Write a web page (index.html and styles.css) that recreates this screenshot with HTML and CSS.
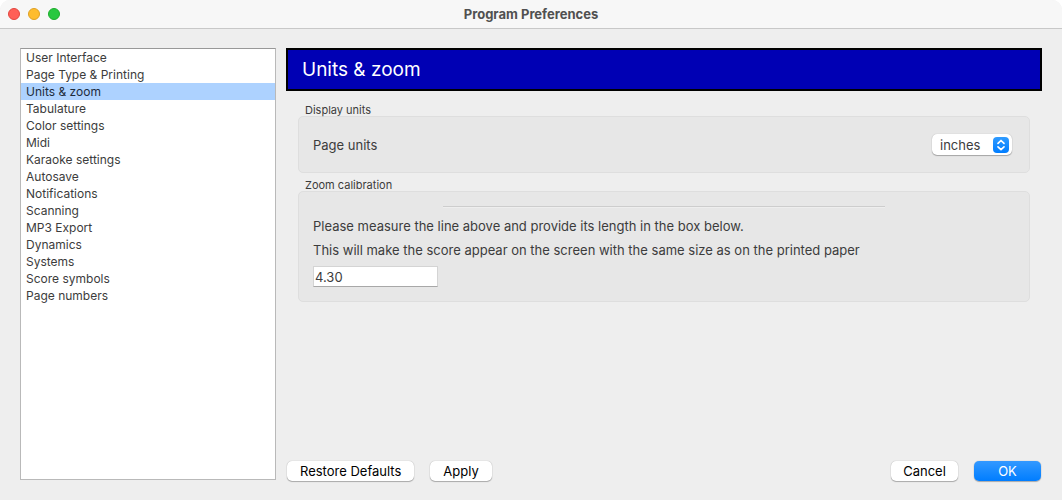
FILE: index.html
```html
<!DOCTYPE html>
<html lang="en">
<head>
<meta charset="utf-8">
<meta name="viewport" content="width=device-width, initial-scale=1">
<title>Program Preferences</title>
<link rel="stylesheet" href="styles.css">
</head>
<body>
<div class="window">
  <header class="titlebar">
    <div class="lights">
      <button class="light light-close" type="button" aria-label="Close"></button>
      <button class="light light-minimize" type="button" aria-label="Minimize"></button>
      <button class="light light-zoom" type="button" aria-label="Zoom"></button>
    </div>
    <h1 class="window-title">Program Preferences</h1>
  </header>
  <div class="content">
    <nav class="categories" aria-label="Categories">
      <a class="category" href="#user-interface">User Interface</a>
      <a class="category" href="#page-type">Page Type &amp; Printing</a>
      <a class="category category-selected" href="#units" aria-current="page">Units &amp; zoom</a>
      <a class="category" href="#tabulature">Tabulature</a>
      <a class="category" href="#color">Color settings</a>
      <a class="category" href="#midi">Midi</a>
      <a class="category" href="#karaoke">Karaoke settings</a>
      <a class="category" href="#autosave">Autosave</a>
      <a class="category" href="#notifications">Notifications</a>
      <a class="category" href="#scanning">Scanning</a>
      <a class="category" href="#mp3">MP3 Export</a>
      <a class="category" href="#dynamics">Dynamics</a>
      <a class="category" href="#systems">Systems</a>
      <a class="category" href="#symbols">Score symbols</a>
      <a class="category" href="#page-numbers">Page numbers</a>
    </nav>
    <form class="panel" id="units">
      <h2 class="banner">Units &amp; zoom</h2>
      <div class="groups">
        <fieldset class="group">
          <legend class="group-title">Display units</legend>
          <div class="box box-row">
            <label for="page-units">Page units</label>
            <span class="popup">
              <select class="popup-select" id="page-units">
                <option selected>inches</option>
                <option>mm</option>
              </select>
              <svg class="popup-arrows" viewBox="0 0 16 16" aria-hidden="true">
                <defs>
                  <linearGradient id="arrow-fill" x1="0" y1="0" x2="0" y2="1">
                    <stop offset="0" stop-color="#2f9bff"/>
                    <stop offset="1" stop-color="#007dff"/>
                  </linearGradient>
                </defs>
                <rect width="16" height="16" rx="4" fill="url(#arrow-fill)"/>
                <path d="M5 6.3 8 3.5l3 2.8M5 9.9l3 2.8 3-2.8" fill="none" stroke="#fff" stroke-width="1.7" stroke-linecap="round" stroke-linejoin="round"/>
              </svg>
            </span>
          </div>
        </fieldset>
        <fieldset class="group">
          <legend class="group-title">Zoom calibration</legend>
          <div class="box box-stack">
            <hr class="ruler">
            <label class="note" for="length">Please measure the line above and provide its length in the box below.</label>
            <p class="note">This will make the score appear on the screen with the same size as on the printed paper</p>
            <input class="length" id="length" type="text" value="4.30">
          </div>
        </fieldset>
      </div>
      <div class="actions">
        <button class="button" type="reset">Restore Defaults</button>
        <button class="button" type="button">Apply</button>
        <button class="button button-cancel" type="button">Cancel</button>
        <button class="button button-primary" type="submit">OK</button>
      </div>
    </form>
  </div>
</div>
</body>
</html>
```
FILE: styles.css
```css
* {
  box-sizing: border-box;
}

body {
  margin: 0;
  background: #fff;
  color: #3c3c3c;
  font: 13px/16px Inter, "Liberation Sans", sans-serif;
}

.window {
  display: flex;
  flex-direction: column;
  min-height: 100vh;
  overflow: hidden;
  border-radius: 10px 10px 0 0;
  background: #eee;
}

.titlebar {
  display: grid;
  grid-template-columns: 1fr auto 1fr;
  align-items: center;
  height: 29px;
  padding: 0 8px;
  border-bottom: 1px solid #c8c8c8;
  background: #f7f7f7;
}

.lights {
  display: flex;
  gap: 8px;
}

.light {
  width: 12px;
  height: 12px;
  padding: 0;
  border: 1px solid;
  border-radius: 50%;
}

.light-close {
  border-color: #e2463f;
  background: #ff5f57;
}

.light-minimize {
  border-color: #dfa023;
  background: #febc2e;
}

.light-zoom {
  border-color: #1dad2b;
  background: #28c840;
}

.window-title {
  margin: 0;
  color: #505050;
  font-size: 13px;
  font-weight: 700;
}

.content {
  display: flex;
  flex: 1;
  gap: 10px;
  padding: 19px 20px 20px;
}

.categories {
  flex: 0 0 256px;
  border: 1px solid #b9b9b9;
  border-top-color: #989898;
  background: #fff;
}

.category {
  display: block;
  padding: 0 5px;
  color: #3c3c3c;
  font-size: 12px;
  line-height: 17px;
  text-decoration: none;
}

.category-selected {
  background: #add2ff;
  color: #1e2c3c;
}

.panel {
  display: flex;
  flex: 1;
  flex-direction: column;
  min-width: 0;
}

.banner {
  margin: 0;
  padding: 8px 14px 7px;
  border: 2px solid #000;
  background: #0000b4;
  color: #fff;
  font-size: 19px;
  font-weight: 400;
  line-height: 24px;
}

.groups {
  display: flex;
  flex: 1;
  flex-direction: column;
  gap: 6px;
  padding: 13px 12px;
}

.group {
  min-width: 0;
  margin: 0;
  padding: 0;
  border: 0;
}

.group-title {
  padding: 0 7px;
  font-size: 11px;
  line-height: 12px;
}

.box {
  padding: 14px;
  border: 1px solid #dedede;
  border-radius: 5px;
  background: #e7e7e7;
}

.box-row {
  display: flex;
  align-items: center;
  justify-content: space-between;
  padding: 17px;
  padding-left: 14px;
}

.popup {
  display: grid;
  align-items: center;
}

.popup-select,
.popup-arrows {
  grid-area: 1 / 1;
}

.popup-select {
  width: 80px;
  height: 21px;
  padding: 0 8px;
  border: 0;
  border-radius: 5px;
  appearance: none;
  background: #fff;
  box-shadow: 0 0 1px #0004, 0 1px 1px #0004;
  color: #3c3c3c;
  font: inherit;
}

.popup-arrows {
  justify-self: end;
  width: 16px;
  height: 16px;
  margin-right: 3px;
  pointer-events: none;
}

.box-stack {
  display: flex;
  flex-direction: column;
  align-items: flex-start;
  gap: 8px;
}

.ruler {
  align-self: center;
  width: 63%;
  margin: 0 0 2px;
  border: 0;
  border-top: 1px solid #cdcdcd;
  border-bottom: 1px solid #eee;
}

.note {
  margin: 0;
}

.length {
  width: 125px;
  height: 21px;
  padding: 1px;
  border: 1px solid #d4d4d4;
  border-bottom-color: #a8a8a8;
  background: #fff;
  color: #3c3c3c;
  font: inherit;
}

.actions {
  display: flex;
  gap: 16px;
  padding: 0 1px;
}

.button {
  height: 20px;
  margin-bottom: -1px;
  padding: 0 13px;
  border: 0;
  border-radius: 5px;
  background: #fff;
  box-shadow: 0 0 1px #0005, 0 1px 1px #0004;
  color: #000;
  font: inherit;
}

.button-cancel {
  margin-left: auto;
}

.button-cancel,
.button-primary {
  min-width: 67px;
  padding: 0 12px;
}

.button-primary {
  background: linear-gradient(#3399ff, #007dff);
  color: #fff;
}
```
